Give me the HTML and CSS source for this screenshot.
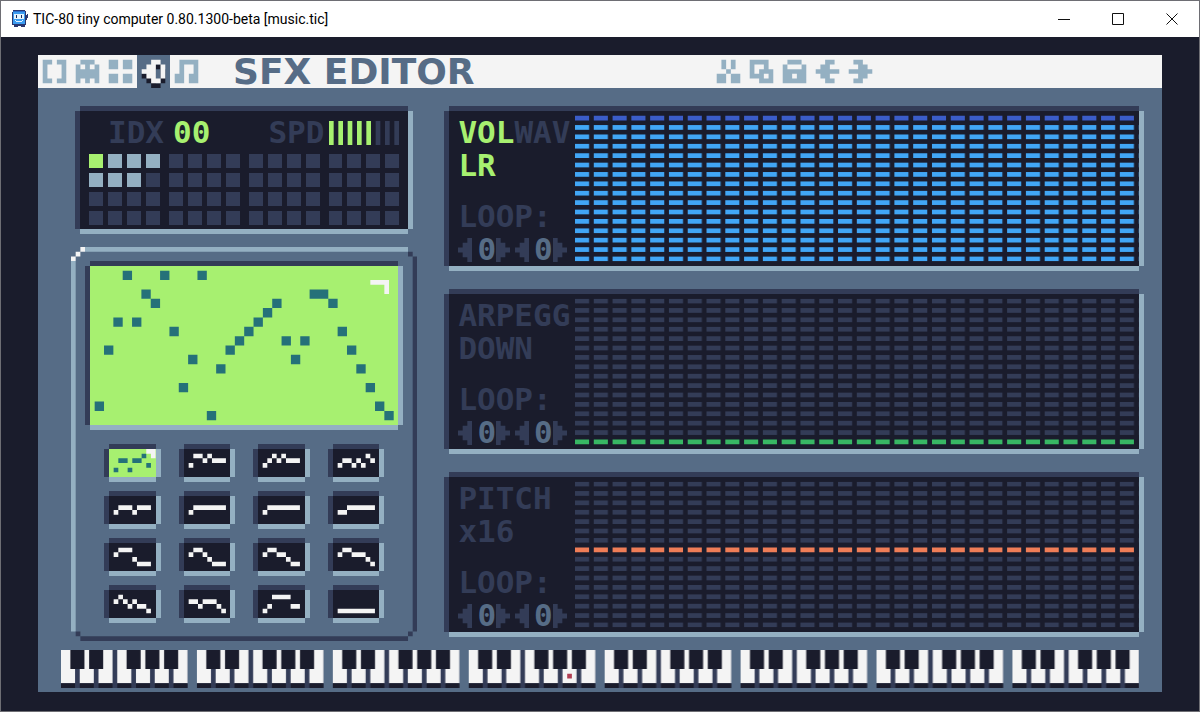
FILE: index.html
```html
<!DOCTYPE html>
<html lang="en">
<head>
<meta charset="utf-8">
<meta name="viewport" content="width=device-width, initial-scale=1">
<title>TIC-80 tiny computer</title>
<link rel="stylesheet" href="styles.css">
</head>
<body>
<div class="window">
  <div class="titlebar">
    <svg class="app-icon" viewBox="0 0 18 18" aria-hidden="true">
      <path fill="#29366f" d="M2 0h12v1h1v4h1V4h1v4h-1v2h-1v5h-1v2h-4v-1H7v1H3v-2H1V2h1z"/>
      <path fill="#3b9bf0" d="M2 2h12v12H2z"/>
      <path fill="#2b6fd0" d="M2 1h12v1H2z"/>
      <path fill="#e4f3ff" d="M3 4h10v5H3zM4 10h1v1h6v-1h1v1h-1v1H5v-1H4z"/>
      <path fill="#1a2c5c" d="M5 5h1v3H5zM10 5h1v3h-1z"/>
    </svg>
    <span class="caption">TIC-80 tiny computer 0.80.1300-beta [music.tic]</span>
    <div class="window-buttons">
      <button aria-label="Minimize"><svg viewBox="0 0 12 12"><path d="M0 6.5h12"/></svg></button>
      <button aria-label="Maximize"><svg viewBox="0 0 12 12"><path d="M.5.5h11v11H.5z"/></svg></button>
      <button aria-label="Close"><svg viewBox="0 0 12 12"><path d="M.5.5l11 11M11.5.5l-11 11"/></svg></button>
    </div>
  </div>

  <div class="bezel">
    <main class="screen">
      <header class="toolbar">
        <nav class="tabs">
          <button aria-label="Code" data-bitmap="##.## #...# #...# #...# ##.##"></button>
          <button aria-label="Sprites" data-bitmap=".###. #.#.# ##### ##### #.#.#"></button>
          <button aria-label="Map" data-bitmap="##.## ##.## ..... ##.## ##.##"></button>
          <button aria-label="SFX" class="active" data-bitmap="..##. .##.# ###.# .##.# ..##."></button>
          <button aria-label="Music" data-bitmap=".#### .#..# .#..# ##.## ##.##"></button>
          <h1>SFX EDITOR</h1>
        </nav>
        <div class="actions">
          <button aria-label="Cut" data-bitmap=".#.#. .#.#. ..#.. ##.## ##.##"></button>
          <button aria-label="Copy" data-bitmap="####. #..#. #.### ###.# ..###"></button>
          <button aria-label="Paste" data-bitmap=".###. #...# ##### ##.## #####"></button>
          <button aria-label="Undo" data-bitmap="..##. .##.. ##### .##.. ..##."></button>
          <button aria-label="Redo" data-bitmap=".##.. ..##. ##### ..##. .##.."></button>
        </div>
      </header>

      <div class="editor">
        <div class="left">
          <section class="inset selector">
            <div class="selector-head">
              <span class="index">IDX <output>00</output></span>
              <span class="speed">SPD
                <svg viewBox="0 0 15 5" preserveAspectRatio="none" aria-label="5 of 8">
                  <path class="on" d="M0 0h1v5H0zM2 0h1v5H2zM4 0h1v5H4zM6 0h1v5H6zM8 0h1v5H8z"/>
                  <path class="off" d="M10 0h1v5h-1zM12 0h1v5h-1zM14 0h1v5h-1z"/>
                </svg>
              </span>
            </div>
            <div class="banks" id="banks"></div>
          </section>

          <section class="waves">
            <svg class="frame" viewBox="0 0 74 84" preserveAspectRatio="none" aria-hidden="true">
              <path fill="#94b0c2" d="M3 0h69v1H3zM0 3h1v79H0z"/>
              <path fill="#333c57" d="M72 1h1v1h-1zM73 2h1v80h-1zM72 82h1v1h-1zM1 82h1v1H1zM2 83h70v1H2z"/>
              <path fill="#f4f4f4" d="M2 0h1v1H2zM1 1h1v1H1zM0 2h1v1H0z"/>
            </svg>
            <div class="inset display">
              <svg id="wave" viewBox="0 0 66 34" preserveAspectRatio="none" aria-label="Waveform"></svg>
            </div>
            <div class="thumbs" id="thumbs"></div>
          </section>
        </div>

        <div class="right">
          <section class="inset channel volume">
            <div class="labels">
              <div class="row"><button class="lit">VOL</button><button>WAV</button></div>
              <div class="row"><button class="lit">L</button><button class="lit">R</button></div>
              <div class="row loop">LOOP:</div>
              <div class="row steppers"></div>
            </div>
            <svg class="bars" viewBox="0 0 120 33" preserveAspectRatio="none" aria-label="Volume envelope">
              <defs><pattern id="bar" width="4" height="2" patternUnits="userSpaceOnUse" y="1"><path fill="#41a6f6" d="M0 0h3v1H0z"/></pattern></defs>
              <path fill="url(#bar)" d="M0 3h120v29H0z"/>
              <path class="value" d="M0 1.5h120"/>
            </svg>
          </section>
          <section class="inset channel arpeggio">
            <div class="labels">
              <div class="row"><button>ARPEGG</button></div>
              <div class="row"><button>DOWN</button></div>
              <div class="row loop">LOOP:</div>
              <div class="row steppers"></div>
            </div>
            <svg class="bars" viewBox="0 0 120 33" preserveAspectRatio="none" aria-label="Arpeggio envelope">
              <defs><pattern id="slot" width="4" height="2" patternUnits="userSpaceOnUse" y="1"><path fill="#333c57" d="M0 0h3v1H0z"/></pattern></defs>
              <path fill="url(#slot)" d="M0 1h120v29H0z"/>
              <path class="value" d="M0 31.5h120"/>
            </svg>
          </section>
          <section class="inset channel pitch">
            <div class="labels">
              <div class="row"><button>PITCH</button></div>
              <div class="row"><button>x16</button></div>
              <div class="row loop">LOOP:</div>
              <div class="row steppers"></div>
            </div>
            <svg class="bars" viewBox="0 0 120 33" preserveAspectRatio="none" aria-label="Pitch envelope">
              <path fill="url(#slot)" d="M0 1h120v13H0zM0 16h120v16H0z"/>
              <path class="value" d="M0 15.5h120"/>
            </svg>
          </section>
        </div>
      </div>

      <svg class="piano" viewBox="0 0 230 8" preserveAspectRatio="none" aria-label="Piano">
        <defs>
          <pattern id="octave" width="29" height="8" patternUnits="userSpaceOnUse">
            <path fill="#333c57" d="M0 0h27v8H0z"/>
            <path fill="#f4f4f4" d="M0 0h3v7H0zM4 0h3v7H4zM8 0h3v7H8zM12 0h3v7h-3zM16 0h3v7h-3zM20 0h3v7h-3zM24 0h3v7h-3z"/>
            <path fill="#1a1c2c" d="M2 0h3v4H2zM6 0h3v4H6zM14 0h3v4h-3zM18 0h3v4h-3zM22 0h3v4h-3zM0 7h3v1H0zM4 7h3v1H4zM8 7h3v1H8zM12 7h3v1h-3zM16 7h3v1h-3zM20 7h3v1h-3zM24 7h3v1h-3z"/>
          </pattern>
        </defs>
        <path fill="url(#octave)" d="M0 0h230v8H0z"/>
        <path fill="#b13e53" d="M108 5h1v1h-1z"/>
      </svg>
    </main>
  </div>
</div>
<script src="script.js"></script>
</body>
</html>
```

FILE: styles.css
```css
* { box-sizing: border-box; }

body {
  margin: 0;
  background: #1a1c2c;
  font-family: "DejaVu Sans Mono", monospace;
}

button {
  padding: 0;
  border: 0;
  background: none;
  color: inherit;
  font: inherit;
  cursor: pointer;
}

svg { display: block; }

.window {
  display: flex;
  flex-direction: column;
  min-height: 100vh;
  border: 1px solid #6e6e74;
  background: #1a1c2c;
}

.titlebar {
  display: flex;
  align-items: center;
  height: 36px;
  padding-left: 10px;
  background: #fff;
  color: #000;
  font: 14px Roboto, "Open Sans", sans-serif;
}

.app-icon { width: 18px; height: 18px; margin-right: 4px; }

.window-buttons { display: flex; margin-left: auto; height: 100%; }

.window-buttons button {
  display: grid;
  place-items: center;
  width: 54px;
}

.window-buttons svg {
  width: 12px;
  height: 12px;
  fill: none;
  stroke: #111;
}

.bezel { flex: 1; padding: 18px 37px; }

.screen { background: #566c86; padding-bottom: 4px; }

.toolbar {
  display: flex;
  height: 33px;
  background: #f4f4f4;
  color: #94b0c2;
}

.tabs { display: flex; flex: 0 0 60%; }
.actions { display: flex; }

.toolbar button { width: 33px; height: 33px; }
.toolbar svg { width: 33px; height: 33px; fill: currentColor; }
.toolbar .active { background: #566c86; color: #f4f4f4; }
.toolbar .shadow { fill: #1a1c2c; }

h1 {
  margin: 0 0 0 30px;
  color: #566c86;
  font: bold 36px/33px "DejaVu Sans", sans-serif;
  white-space: nowrap;
}

.editor {
  display: grid;
  grid-template-columns: 347fr 689fr;
  column-gap: 32px;
  align-items: start;
  padding: 23px 23px 0 33px;
}

.inset {
  background: #1a1c2c;
  box-shadow: 0 -5px #333c57, -5px 0 #333c57, 5px 0 #94b0c2, 0 5px #94b0c2;
}

.left { display: grid; gap: 18px; }

.selector {
  margin: 0 9px;
  padding: 5px 9px 4px;
  color: #333c57;
}

.selector-head {
  display: flex;
  justify-content: space-between;
  padding-left: 19px;
  margin-bottom: 5px;
  font-weight: bold;
  font-size: 31px;
  line-height: 33px;
}

.index, .speed { display: flex; align-items: center; }
.index { gap: 9px; }
.speed { gap: 5px; }
.speed svg { width: 70px; height: 24px; }
.index output, .lit { color: #a7f070; }
.on { fill: #a7f070; }
.off { fill: #333c57; }

.banks { display: grid; grid-template-columns: repeat(4, 1fr); gap: 9px; }
.bank { display: grid; grid-template-columns: repeat(4, 1fr); gap: 5px; }
.bank button { height: 14px; background: #333c57; }
.bank .used { background: #94b0c2; }
.bank .selected { background: #a7f070; }

.waves { position: relative; padding: 19px 19px 23px; }

.frame {
  position: absolute;
  inset: 0;
  width: 100%;
  height: 100%;
  pointer-events: none;
}

.display { background: #a7f070; }
.display svg { width: 100%; height: 159px; }

.thumbs {
  display: grid;
  grid-template-columns: repeat(4, 1fr);
  gap: 19px 28px;
  margin-top: 24px;
  padding: 0 19px;
}

.thumbs svg { width: 100%; height: 28px; fill: #f4f4f4; }
.thumbs .selected { background: #a7f070; }
.thumbs .selected svg, .display svg { fill: #257179; }
.thumbs .glint, .display .glint { fill: #f4f4f4; }

.right { display: grid; gap: 28px; }

.channel {
  display: flex;
  color: #333c57;
}

.labels {
  flex: 0 0 126px;
  padding: 5px 0 0 9px;
  font-weight: bold;
  font-size: 31px;
  line-height: 33px;
}

.row { display: flex; height: 33px; }
.loop { margin-top: 18px; }

.steppers { align-items: center; color: #566c86; }
.steppers button { width: 19px; }
.steppers svg { width: 14px; height: 24px; fill: #333c57; }

.bars { flex: 1; min-width: 0; height: 155px; }

.value { stroke-width: 1; stroke-dasharray: 3 1; }
.volume .value { stroke: #3b5dc9; }
.arpeggio .value { stroke: #38b764; }
.pitch .value { stroke: #ef7d57; }

.piano {
  width: calc(100% - 46px);
  height: 38px;
  margin: 9px 23px 0;
}
```

FILE: script.js
```js
// Turns rows such as "##. .##" into one path of unit squares.
function bitmapPath(rows, dx, dy) {
  let d = '';
  rows.forEach((row, y) => {
    for (const run of row.matchAll(/#+/g)) {
      const w = run[0].length;
      d += `M${run.index + dx} ${y + dy}h${w}v1h-${w}z`;
    }
  });
  return d;
}

document.querySelectorAll('[data-bitmap]').forEach(button => {
  const rows = button.dataset.bitmap.split(' ');
  const shadow = button.classList.contains('active')
    ? `<path class="shadow" d="${bitmapPath(rows, 1, 2)}"/>` : '';
  button.innerHTML = `<svg viewBox="0 0 7 7">${shadow}<path d="${bitmapPath(rows, 1, 1)}"/></svg>`;
});

// 64 sound slots in four banks of sixteen; only the first seven hold data.
const used = { 0: 'selected', 1: 'used', 2: 'used', 3: 'used', 4: 'used', 5: 'used', 6: 'used' };
const banks = document.getElementById('banks');
for (let b = 0; b < 4; b++) {
  const bank = document.createElement('div');
  bank.className = 'bank';
  for (let i = 0; i < 16; i++) {
    const cell = document.createElement('button');
    const n = b * 16 + i;
    cell.className = used[n] || '';
    cell.setAttribute('aria-label', `Sound ${n}`);
    bank.append(cell);
  }
  banks.append(bank);
}

// Row of each of the 32 samples, counted from the top.
const samples = [14, 8, 5, 0, 5, 2, 3, 0, 6, 12, 9, 0, 15, 10, 8, 7,
  6, 5, 4, 3, 7, 9, 7, 2, 2, 3, 6, 8, 10, 12, 14, 15];
document.getElementById('wave').innerHTML =
  `<path d="${samples.map((r, i) => `M${1 + i * 2} ${1 + r * 2}h2v2h-2z`).join('')}"/>` +
  '<path class="glint" d="M60 3h4v3h-1v-2h-3z"/>';

// Row of each of the eight columns in the sixteen thumbnails.
const waves = ['42242213', '31121222', '32121222', '32232312',
  '32223222', '32222222', '32222222', '33222222',
  '21113444', '21123444', '21122344', '21122234',
  '21232334', '22322234', '43111133', '44444444'];
document.getElementById('thumbs').innerHTML = waves.map((wave, n) => {
  const d = [...wave].map((y, x) => `M${x + 1} ${y}h1v1h-1z`).join('');
  const glint = n === 0 ? '<path class="glint" d="M8 0h2v2h-1v-1h-1z"/>' : '';
  return `<button class="inset${n === 0 ? ' selected' : ''}" aria-label="Wave ${n}">` +
    `<svg viewBox="0 0 10 6" preserveAspectRatio="none"><path d="${d}"/>${glint}</svg></button>`;
}).join('');

const arrow = (label, rows) =>
  `<button aria-label="${label}"><svg viewBox="0 0 3 5" preserveAspectRatio="none"><path d="${bitmapPath(rows.split(' '), 0, 0)}"/></svg></button>`;
const stepper = arrow('Decrease', '..# .## ### .## ..#') + '<output>0</output>' +
  arrow('Increase', '#.. ##. ### ##. #..');
document.querySelectorAll('.steppers').forEach(el => { el.innerHTML = stepper + stepper; });
```
